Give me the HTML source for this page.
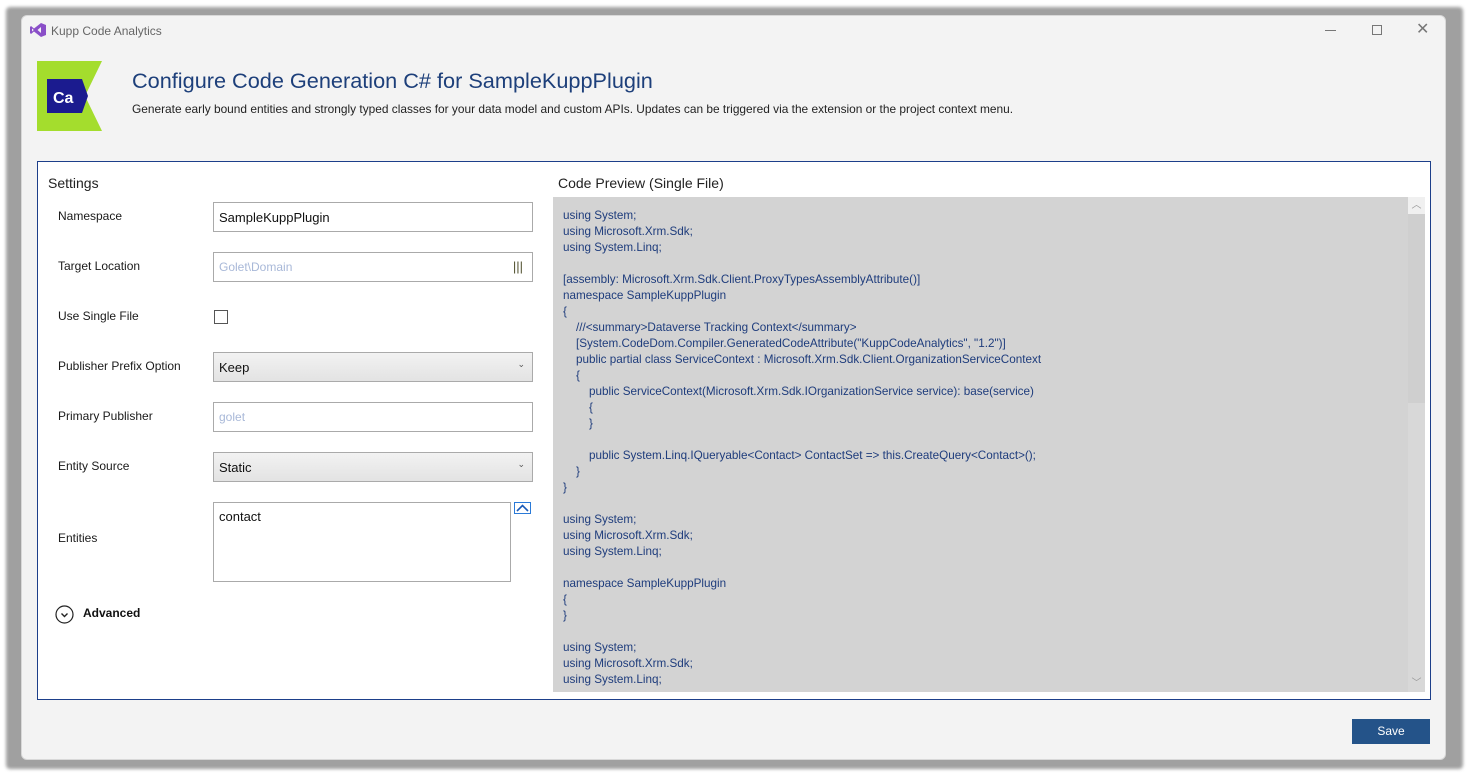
<!DOCTYPE html>
<html><head><meta charset="utf-8"><style>
*{margin:0;padding:0;box-sizing:border-box}
body{width:1468px;height:776px;background:#fff;position:relative;overflow:hidden;font-family:"Liberation Sans",sans-serif}
.shadow{position:absolute;left:6px;top:7px;width:1457px;height:762px;background:#a0a0a0;border-radius:4px;filter:blur(1.5px)}
.win{position:absolute;left:21px;top:15px;width:1425px;height:745px;background:#f3f3f3;border:1px solid #d8d8d8;border-radius:6px}
.abs{position:absolute}
.lbl{position:absolute;left:58px;font-size:12px;color:#1a1a1a}
.inp{position:absolute;left:213px;width:320px;height:30px;background:#fff;border:1px solid #aaa;font-size:13px;padding:7px 5px}
.code{position:absolute;left:553px;top:197px;width:872px;height:495px;background:#d3d3d3;overflow:hidden}
.code pre{font-family:"Liberation Sans",sans-serif;font-size:11.7px;line-height:16px;color:#1e3c7c;padding:11px 10px;white-space:pre}
</style></head><body>
<div class="shadow"></div>
<div class="win"></div>
<svg class="abs" style="left:29px;top:22px" width="18" height="16" viewBox="0 0 18 16"><path d="M12 1 L17 3 V13 L12 15 L5 9.5 L2 12 L1 11 V5 L2 4 L5 6.5 Z M12 5 L8.5 8 L12 11 Z M3 6.5 V9.5 L4.8 8Z" fill="#8a4fc8" fill-rule="evenodd"/></svg>
<div class="abs" style="left:51px;top:24px;font-size:12px;color:#666">Kupp Code Analytics</div>
<div class="abs" style="left:1325px;top:30px;width:11px;height:1px;background:#777"></div>
<div class="abs" style="left:1372px;top:25px;width:10px;height:10px;border:1px solid #777"></div>
<div class="abs" style="left:1416px;top:23px;font-size:16px;color:#777;line-height:14px">✕</div>
<svg class="abs" style="left:37px;top:61px" width="65" height="70"><polygon points="0,0 65,0 48,35 65,70 0,70" fill="#a4dd2d"/><polygon points="10,18 45,18 51,35 45,52 10,52" fill="#1b1b8f"/><text x="16" y="42" font-family="Liberation Sans" font-weight="bold" font-size="16" fill="#fff">Ca</text></svg>
<div class="abs" style="left:132px;top:68px;font-size:21.7px;color:#1d3f7a">Configure Code Generation C# for SampleKuppPlugin</div>
<div class="abs" style="left:132px;top:102px;font-size:11.9px;color:#222">Generate early bound entities and strongly typed classes for your data model and custom APIs. Updates can be triggered via the extension or the project context menu.</div>
<div class="abs" style="left:37px;top:161px;width:1394px;height:539px;background:#fff;border:1px solid #1d3f8a"></div>
<div class="abs" style="left:48px;top:175px;font-size:14px;color:#222">Settings</div>
<div class="abs" style="left:558px;top:175px;font-size:14px;color:#222">Code Preview (Single File)</div>
<div class="lbl" style="top:209px">Namespace</div>
<div class="inp" style="top:202px;color:#111">SampleKuppPlugin</div>
<div class="lbl" style="top:259px">Target Location</div>
<div class="inp" style="top:252px;color:#a8b8d8;font-size:12px">Golet\Domain<span style="position:absolute;right:9px;top:6px;color:#553;font-size:13px">|||</span></div>
<div class="lbl" style="top:309px">Use Single File</div>
<div class="abs" style="left:214px;top:310px;width:14px;height:14px;border:1px solid #555;background:#fff"></div>
<div class="lbl" style="top:359px">Publisher Prefix Option</div>
<div class="inp" style="top:352px;background:linear-gradient(#f2f2f2,#e3e3e3);color:#111">Keep<span style="position:absolute;right:7px;top:6px;font-size:9px;color:#555">⌄</span></div>
<div class="lbl" style="top:409px">Primary Publisher</div>
<div class="inp" style="top:402px;color:#a8b8d8;font-size:12px">golet</div>
<div class="lbl" style="top:459px">Entity Source</div>
<div class="inp" style="top:452px;background:linear-gradient(#f2f2f2,#e3e3e3);color:#111">Static<span style="position:absolute;right:7px;top:6px;font-size:9px;color:#555">⌄</span></div>
<div class="lbl" style="top:531px">Entities</div>
<div class="inp" style="top:502px;width:298px;height:80px;color:#111;padding:6px 5px">contact</div>
<svg class="abs" style="left:514px;top:502px" width="17" height="12"><rect x="0.5" y="0.5" width="16" height="11" fill="#fff" stroke="#2a7ad8"/><path d="M3 9 L8.5 3.5 L14 9" fill="none" stroke="#1a5ab8" stroke-width="1.6"/></svg>
<svg class="abs" style="left:55px;top:605px" width="19" height="19"><circle cx="9.5" cy="9.5" r="8.5" fill="#fff" stroke="#222" stroke-width="1.2"/><path d="M6.5 8.5 L9.5 11.5 L12.5 8.5" fill="none" stroke="#222" stroke-width="1.4"/></svg>
<div class="abs" style="left:83px;top:606px;font-size:12px;font-weight:bold;color:#111">Advanced</div>
<div class="code"><pre>using System;
using Microsoft.Xrm.Sdk;
using System.Linq;

[assembly: Microsoft.Xrm.Sdk.Client.ProxyTypesAssemblyAttribute()]
namespace SampleKuppPlugin
{
    ///&lt;summary&gt;Dataverse Tracking Context&lt;/summary&gt;
    [System.CodeDom.Compiler.GeneratedCodeAttribute("KuppCodeAnalytics", "1.2")]
    public partial class ServiceContext : Microsoft.Xrm.Sdk.Client.OrganizationServiceContext
    {
        public ServiceContext(Microsoft.Xrm.Sdk.IOrganizationService service): base(service)
        {
        }

        public System.Linq.IQueryable&lt;Contact&gt; ContactSet =&gt; this.CreateQuery&lt;Contact&gt;();
    }
}

using System;
using Microsoft.Xrm.Sdk;
using System.Linq;

namespace SampleKuppPlugin
{
}

using System;
using Microsoft.Xrm.Sdk;
using System.Linq;</pre>
<div class="abs" style="left:855px;top:0;width:17px;height:495px;background:#cfcfcf"></div>
<div class="abs" style="left:855px;top:0;width:17px;height:17px;background:#f0f0f0;color:#999;font-size:10px;text-align:center;line-height:17px">︿</div>
<div class="abs" style="left:855px;top:206px;width:17px;height:289px;background:#d8d8d8"></div>
<div class="abs" style="left:855px;top:478px;width:17px;height:17px;color:#999;font-size:10px;text-align:center;line-height:17px">﹀</div>
</div>
<div class="abs" style="left:1352px;top:719px;width:78px;height:25px;background:#245389;color:#fff;font-size:12px;text-align:center;line-height:25px">Save</div>
</body></html>
